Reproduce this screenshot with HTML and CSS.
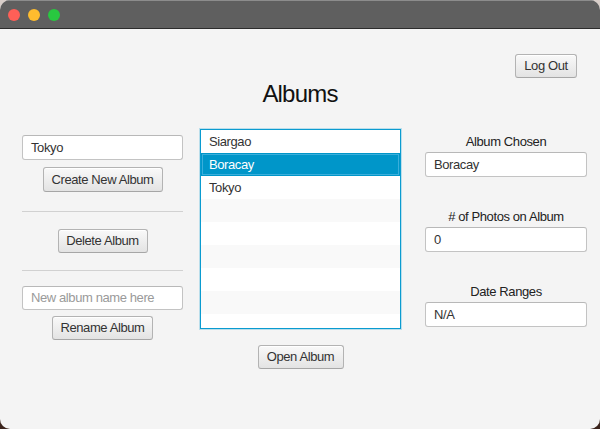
FILE: index.html
```html
<!DOCTYPE html>
<html>
<head>
<meta charset="utf-8">
<link rel="stylesheet" href="styles.css">
</head>
<body>
<div class="window">
  <div class="titlebar">
    <span class="light red"></span>
    <span class="light yellow"></span>
    <span class="light green"></span>
  </div>
  <div class="content">
    <div class="header">
      <button class="btn">Log Out</button>
    </div>
    <h1 class="title">Albums</h1>
    <div class="main">
      <div class="col-left">
        <div class="field field-first">Tokyo</div>
        <button class="btn btn-create">Create New Album</button>
        <div class="sep sep-1"></div>
        <button class="btn btn-delete">Delete Album</button>
        <div class="sep sep-2"></div>
        <div class="field field-rename placeholder">New album name here</div>
        <button class="btn btn-rename">Rename Album</button>
      </div>
      <div class="col-mid">
        <div class="list">
          <div class="row">Siargao</div>
          <div class="row odd selected">Boracay</div>
          <div class="row">Tokyo</div>
          <div class="row odd"></div>
          <div class="row"></div>
          <div class="row odd"></div>
          <div class="row"></div>
          <div class="row odd"></div>
          <div class="row last"></div>
        </div>
        <button class="btn btn-open">Open Album</button>
      </div>
      <div class="col-right">
        <div class="label">Album Chosen</div>
        <div class="field">Boracay</div>
        <div class="label label-gap">#&nbsp;of Photos on Album</div>
        <div class="field">0</div>
        <div class="label label-gap">Date Ranges</div>
        <div class="field">N/A</div>
      </div>
    </div>
  </div>
</div>
</body>
</html>
```

FILE: styles.css
```css
html, body {
  margin: 0;
  padding: 0;
  width: 600px;
  height: 429px;
  overflow: hidden;
  background: linear-gradient(to bottom, #d9cfca 0%, #8a7770 50%, #3b241c 100%);
}

.window {
  width: 600px;
  height: 429px;
  border-radius: 10px;
  overflow: hidden;
  background: #f4f4f4;
  font-family: "Liberation Sans", Arial, sans-serif;
  font-size: 13px;
  letter-spacing: -0.4px;
  color: #333;
  display: flex;
  flex-direction: column;
}

.titlebar {
  background: #5f5f5f;
  border-bottom: 1px solid #2c2c2c;
  box-shadow: inset 0 1px 0 #8c8c8c;
  display: flex;
  align-items: center;
  gap: 8px;
  padding-left: 8px;
  padding-top: 1px;
  box-sizing: border-box;
  height: 29px;
  flex-shrink: 0;
}

.light {
  width: 12px;
  height: 12px;
  border-radius: 50%;
  display: block;
}
.red { background: #fe5f57; }
.yellow { background: #febc2e; }
.green { background: #28c840; }

.content {
  padding: 25px 23px 0 22px;
}

.header {
  display: flex;
  justify-content: flex-end;
}

.btn {
  font-family: inherit;
  font-size: 13px;
  letter-spacing: -0.4px;
  color: #333;
  height: 24px;
  padding: 0 8px;
  margin: 0;
  border: 1px solid #b3b3b3;
  border-bottom-color: #a6a6a6;
  border-radius: 3px;
  background: linear-gradient(to bottom, #f9f9f9 0%, #e3e3e3 100%);
  box-shadow: inset 0 1px 0 #ffffff;
  box-sizing: border-box;
  line-height: 20px;
  display: block;
  flex-shrink: 0;
}

.header .btn {
  width: 62px;
  padding: 0;
}

.title {
  margin: 2px 0 0 0;
  font-weight: normal;
  font-size: 24px;
  letter-spacing: -0.8px;
  line-height: 28px;
  color: #111;
  text-align: center;
  padding-left: 1px;
}

.main {
  display: flex;
  margin-top: 21px;
  align-items: flex-start;
  width: 565px;
}

.col-left {
  width: 161px;
  flex-shrink: 0;
  display: flex;
  flex-direction: column;
  align-items: center;
}

.col-mid {
  width: 201px;
  flex-shrink: 0;
  margin-left: 17px;
  display: flex;
  flex-direction: column;
  align-items: center;
}

.col-right {
  width: 162px;
  flex-shrink: 0;
  margin-left: 24px;
  padding-top: 5px;
  display: flex;
  flex-direction: column;
  align-items: center;
}

.field {
  width: 100%;
  height: 25px;
  box-sizing: border-box;
  background: #fff;
  border: 1px solid #c3c3c3;
  border-top-color: #b8b8b8;
  border-radius: 3px;
  padding: 0 8px;
  line-height: 23px;
  color: #333;
  white-space: nowrap;
  overflow: hidden;
  flex-shrink: 0;
}

.field-first { margin-top: 6px; }
.field-rename { margin-top: 15px; height: 24px; line-height: 22px; }
.placeholder { color: #9a9a9a; }

.btn-create { margin-top: 7px; width: 120px; height: 25px; padding: 0; line-height: 21px; }
.btn-delete { margin-top: 17px; width: 90px; padding: 0; }
.btn-rename { margin-top: 6px; width: 101px; padding: 0; }
.btn-open { margin-top: 16px; width: 86px; padding: 0; }

.sep {
  width: 100%;
  height: 0;
  border-top: 1px solid #d1d1d1;
}
.sep-1 { margin-top: 19px; }
.sep-2 { margin-top: 17px; }

.list {
  width: 201px;
  height: 200px;
  box-sizing: border-box;
  border: 1px solid #0a9bd0;
  box-shadow: 0 0 0 1px rgba(10, 155, 208, 0.25), inset 0 0 0 0.5px rgba(10, 155, 208, 0.5);
  background: #fff;
  overflow: hidden;
}

.row {
  height: 23px;
  line-height: 23px;
  padding-left: 8px;
  background: #ffffff;
  color: #333;
  box-sizing: border-box;
}
.row.odd { background: #f9f9f9; }
.row.selected {
  background: #0096c9;
  color: #fff;
  box-shadow: inset 0 0 0 1px #0096c9, inset 0 0 0 2px #3aaedb;
}
.row.last { height: 14px; }

.label {
  height: 16px;
  line-height: 16px;
  color: #222;
  text-align: center;
  margin-bottom: 2px;
}
.label-gap { margin-top: 32px; }
```
